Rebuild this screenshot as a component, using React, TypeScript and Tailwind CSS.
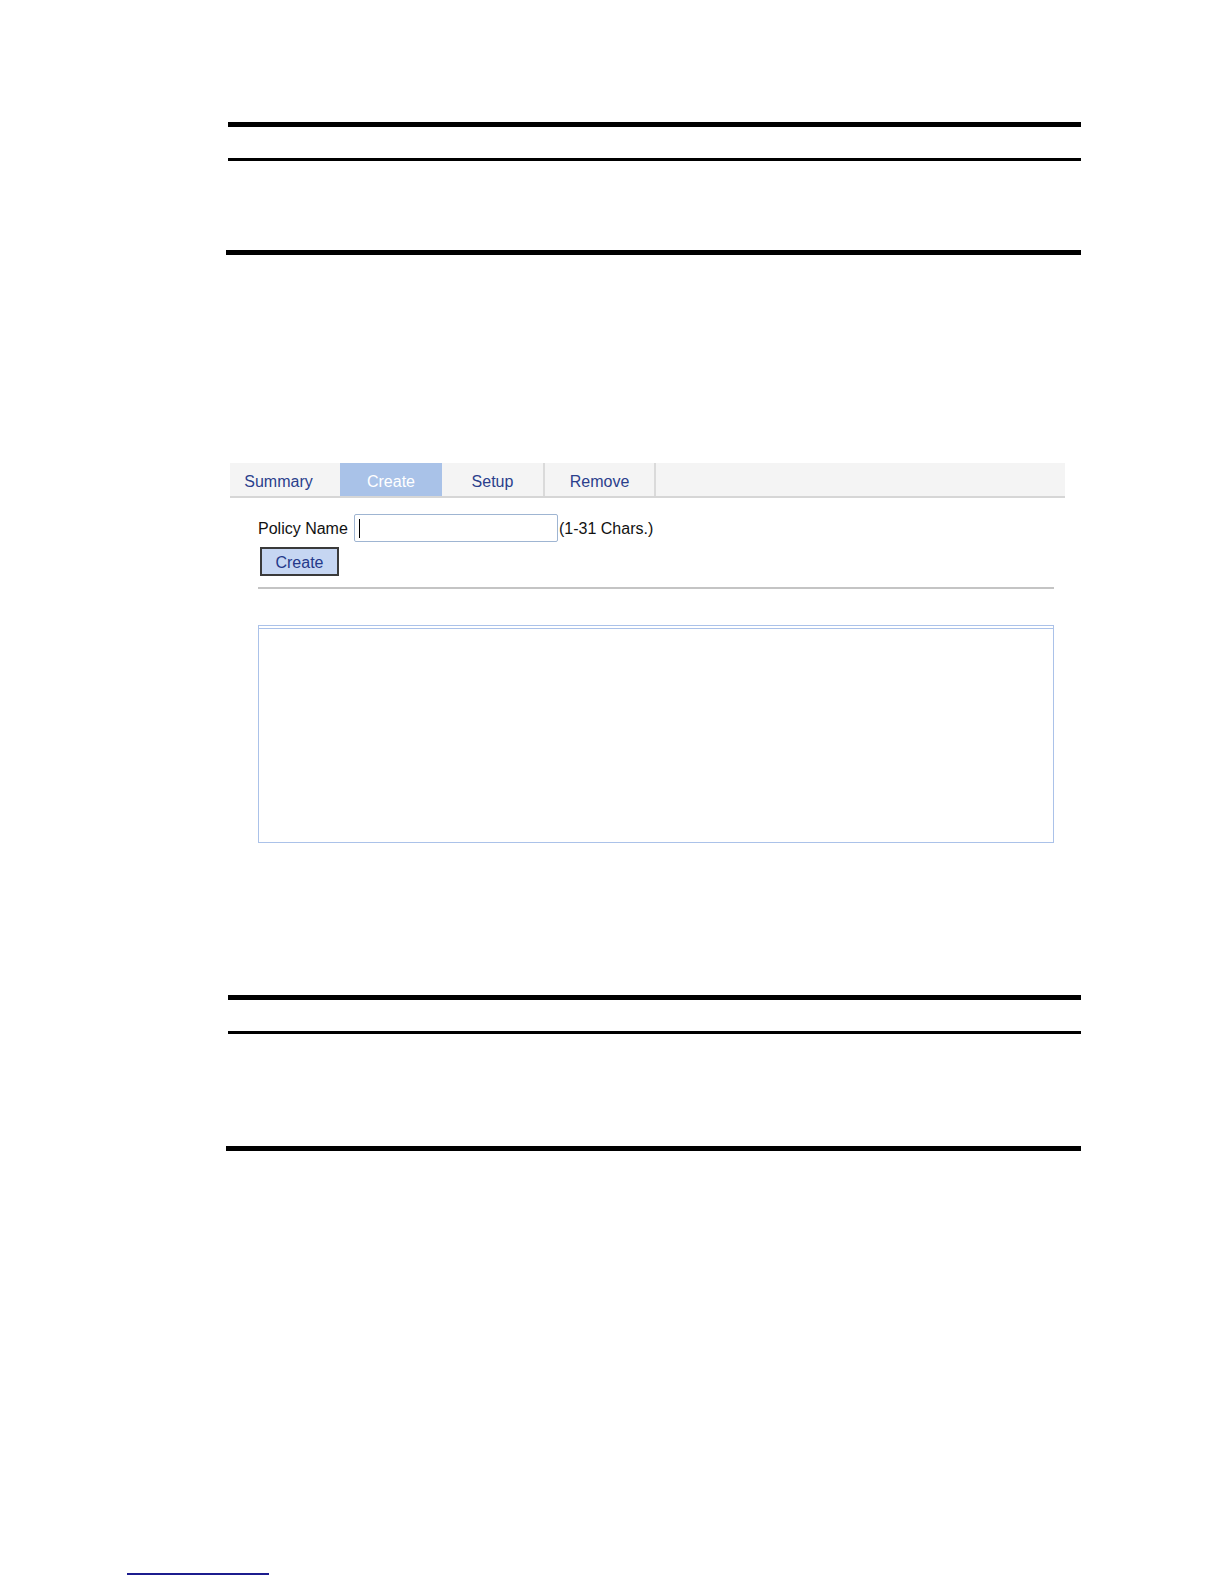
import React from 'react';

const tabs = [
  { label: 'Summary', width: 'w-[110px] pr-[13px]', active: false, sep: false },
  { label: 'Create', width: 'w-[102px]', active: true, sep: false },
  { label: 'Setup', width: 'w-[103px]', active: false, sep: true },
  { label: 'Remove', width: 'w-[111px]', active: false, sep: true },
];

const App: React.FC = () => {
  return (
    <div className="w-[1224px] h-[1584px] bg-white font-['Liberation_Sans',Arial,sans-serif] overflow-hidden">
      {/* Top rule table */}
      <div className="pt-[122px]">
        <div className="ml-[228px] w-[853px] h-[5px] bg-black" />
        <div className="ml-[228px] w-[853px] h-[3px] bg-black mt-[31px]" />
        <div className="ml-[226px] w-[855px] h-[5px] bg-black mt-[89px]" />
      </div>

      {/* Web UI panel */}
      <div className="ml-[230px] w-[835px] mt-[208px]">
        <div className="flex h-[35px] bg-[#f4f4f4] border-b-2 border-[#d6d6d6]">
          {tabs.map((t) => (
            <div
              key={t.label}
              className={`${t.width} flex items-center justify-center pt-[4px] text-[16px] ${
                t.active ? 'bg-[#a9c2e8] text-white' : 'text-[#2b3f8c]'
              } ${t.sep ? 'border-r-2 border-[#dadada]' : ''}`}
            >
              {t.label}
            </div>
          ))}
        </div>

        <div className="pl-[28px] pr-[12px]">
          <div className="flex items-center mt-[16px] h-[28px] text-[16px] text-[#111]">
            <span className="w-[96px] pt-[2px]">Policy Name</span>
            <div className="w-[204px] h-[28px] border border-[#9fb5d2] rounded-[2px] bg-white flex items-center pl-[4px]">
              <div className="w-[1px] h-[19px] bg-black" />
            </div>
            <span className="ml-[1px] pt-[2px]">(1-31 Chars.)</span>
          </div>
          <button className="mt-[5px] ml-[2px] w-[79px] h-[29px] pt-[3px] bg-[#c6d6f2] border-2 border-[#3a3a3a] text-[16px] text-[#24398a] flex items-center justify-center">
            Create
          </button>
          <div className="mt-[11px] w-[796px] h-[2px] bg-[#c4c4c4]" />
          <div className="mt-[36px] w-[796px] h-[218px] border border-[#abc2e9]">
            <div className="mt-[2px] h-[1px] bg-[#abc2e9]" />
          </div>
        </div>
      </div>

      {/* Bottom rule table */}
      <div>
        <div className="ml-[228px] w-[853px] h-[5px] bg-black mt-[152px]" />
        <div className="ml-[228px] w-[853px] h-[3px] bg-black mt-[31px]" />
        <div className="ml-[226px] w-[855px] h-[5px] bg-black mt-[112px]" />
      </div>

      {/* Footnote separator */}
      <div className="ml-[127px] w-[142px] h-[2px] bg-[#1c1c8e] mt-[422px]" />
    </div>
  );
};

export default App;
